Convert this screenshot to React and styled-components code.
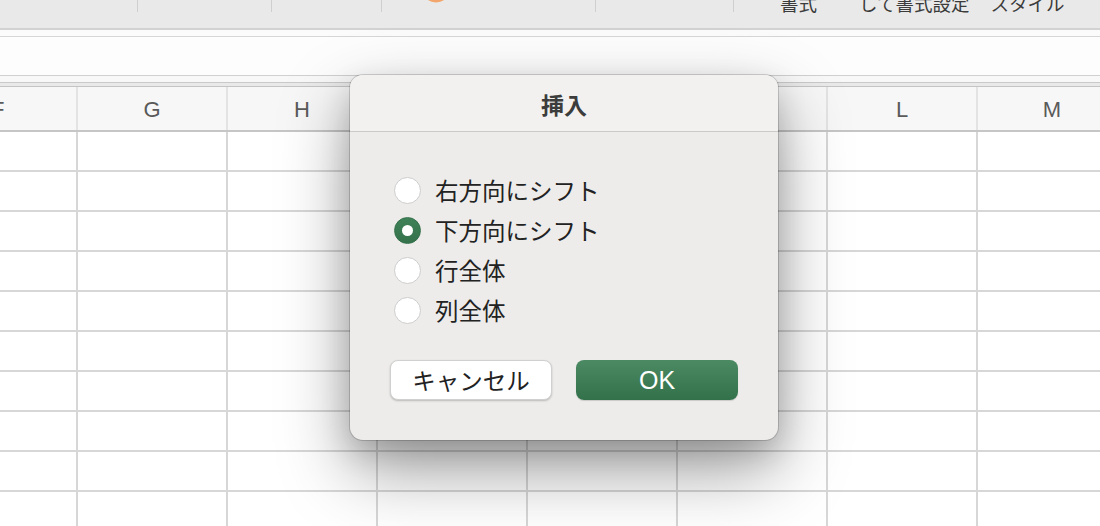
import React from "react";
import styled, { createGlobalStyle } from "styled-components";

const Global = createGlobalStyle`
  html, body { margin: 0; padding: 0; background: #ffffff; }
  body {
    width: 1100px; height: 526px; overflow: hidden;
    font-family: "Liberation Sans", "Noto Sans CJK JP", sans-serif;
  }
  * { box-sizing: border-box; }
`;

const Page = styled.div`
  position: relative;
  width: 1100px;
  height: 526px;
  overflow: hidden;
  display: flex;
  flex-direction: column;
`;

const Toolbar = styled.div`
  height: 30px;
  flex: none;
  background: #e9e9e9;
  border-bottom: 2px solid #d2d2d2;
  display: flex;
  align-items: flex-start;
  overflow: hidden;
`;

const Group = styled.div`
  width: ${(p) => p.$w}px;
  flex: none;
  height: 100%;
  display: flex;
  align-items: flex-start;
  position: relative;
`;

const Sep = styled.div`
  width: 1px;
  height: 12px;
  background: #cfcfcf;
  flex: none;
`;

const Label = styled.span`
  display: block;
  margin-left: ${(p) => p.$ml}px;
  flex: none;
  font-family: "Noto Sans CJK JP", sans-serif;
  font-size: 18.5px;
  line-height: 19px;
  margin-top: -6px;
  color: #3b3b3b;
  white-space: nowrap;
`;

const OrangeIcon = styled.svg`
  display: block;
  margin-left: 40px;
`;

const Strip = styled.div`
  height: ${(p) => p.$h}px;
  flex: none;
  background: ${(p) => p.$bg};
  border-bottom: 1px solid ${(p) => p.$line};
`;

const DoubleRule = styled.div`
  height: 5px;
  flex: none;
  background: #e9e9e9;
  border-top: 1px solid #c9c9c9;
  border-bottom: 1px solid #c4c4c4;
`;

const Sheet = styled.div`
  display: flex;
  flex-direction: column;
  flex: 1;
`;

const Row = styled.div`
  display: flex;
  height: ${(p) => (p.$header ? 45 : 40)}px;
  flex: none;
  background: ${(p) => (p.$header ? "#f7f7f7" : "#ffffff")};
  border-bottom: 2px solid ${(p) => (p.$header ? "#c6c6c6" : "#d7d7d7")};
`;

const Cell = styled.div`
  width: ${(p) => p.$w}px;
  flex: none;
  height: 100%;
  border-right: 2px solid ${(p) => (p.$header ? "#e3e3e3" : "#d7d7d7")};
  display: flex;
  align-items: center;
  justify-content: ${(p) => (p.$edge ? "flex-start" : "center")};
  font-family: "Liberation Sans", sans-serif;
  font-size: 22px;
  color: #5a5a5a;
  padding-top: 2px;
  overflow: hidden;
`;

const EdgeLetter = styled.span`
  margin-left: -9px;
`;

const Dialog = styled.div`
  position: absolute;
  left: 350px;
  top: 75px;
  width: 428px;
  height: 365px;
  border-radius: 13px;
  background: #edecea;
  box-shadow:
    0 0 0 1px rgba(0, 0, 0, 0.16),
    0 30px 70px rgba(0, 0, 0, 0.38),
    0 12px 30px rgba(0, 0, 0, 0.16);
  display: flex;
  flex-direction: column;
  overflow: hidden;
`;

const Title = styled.div`
  height: 57px;
  flex: none;
  background: #f2f1f0;
  border-bottom: 1px solid #cbcac9;
  display: flex;
  align-items: center;
  justify-content: center;
  font-family: "Noto Sans CJK JP", sans-serif;
  font-weight: 700;
  font-size: 23px;
  color: #3c3c3c;
  padding-top: 1px;
`;

const Body = styled.div`
  flex: 1;
  padding: 38px 40px 40px 44px;
  display: flex;
  flex-direction: column;
`;

const Options = styled.div`
  display: flex;
  flex-direction: column;
`;

const Option = styled.label`
  height: 40px;
  display: flex;
  align-items: center;
  gap: 14px;
  font-family: "Noto Sans CJK JP", sans-serif;
  font-size: 23.5px;
  color: #222222;
`;

const Radio = styled.span`
  width: 27px;
  height: 27px;
  flex: none;
  border-radius: 50%;
  display: flex;
  align-items: center;
  justify-content: center;
  background: ${(p) => (p.$checked ? "linear-gradient(#3f8158, #35724c)" : "#ffffff")};
  border: 1px solid ${(p) => (p.$checked ? "#33704a" : "#cdcdcd")};
`;

const Dot = styled.span`
  width: 11px;
  height: 11px;
  border-radius: 50%;
  background: #ffffff;
`;

const Buttons = styled.div`
  margin-top: 30px;
  margin-left: -4px;
  display: flex;
  gap: 24px;
`;

const Button = styled.button`
  width: 162px;
  height: 40px;
  border-radius: 8px;
  border: ${(p) => (p.$primary ? "none" : "0.5px solid #d0d0d0")};
  background: ${(p) => (p.$primary ? "linear-gradient(#4b8a63, #33714b)" : "#ffffff")};
  color: ${(p) => (p.$primary ? "#ffffff" : "#222222")};
  box-shadow: ${(p) =>
    p.$primary ? "0 1px 1px rgba(0,0,0,0.15)" : "0 1px 2px rgba(0,0,0,0.22)"};
  font-family: ${(p) =>
    p.$primary ? '"Liberation Sans", sans-serif' : '"Noto Sans CJK JP", sans-serif'};
  font-size: ${(p) => (p.$primary ? "25px" : "23.5px")};
  font-weight: 400;
  display: flex;
  align-items: center;
  justify-content: center;
  padding: 0;
`;

const columns = [
  { w: 78, label: "F", edge: true },
  { w: 150, label: "G" },
  { w: 150, label: "H" },
  { w: 150, label: "I" },
  { w: 150, label: "J" },
  { w: 150, label: "K" },
  { w: 150, label: "L" },
  { w: 150, label: "M" },
];

const options = [
  { label: "右方向にシフト", checked: false },
  { label: "下方向にシフト", checked: true },
  { label: "行全体", checked: false },
  { label: "列全体", checked: false },
];

export default function App() {
  const rows = Array.from({ length: 10 }, (_, i) => i);
  return (
    <Page>
      <Global />
      <Toolbar>
        <Group $w={137} />
        <Sep />
        <Group $w={133} />
        <Sep />
        <Group $w={109} />
        <Sep />
        <Group $w={213}>
          <OrangeIcon width="30" height="4" viewBox="0 0 30 4">
            <circle cx="14" cy="-12" r="14.5" fill="#f2a66b" />
          </OrangeIcon>
        </Group>
        <Sep />
        <Group $w={137} />
        <Sep />
        <Group $w={366}>
          <Label $ml={46}>書式</Label>
          <Label $ml={42}>して書式設定</Label>
          <Label $ml={21}>スタイル</Label>
        </Group>
      </Toolbar>
      <Strip $h={7} $bg="#fbfbfb" $line="#d6d6d6" />
      <Strip $h={39} $bg="#fdfdfd" $line="#d0d0d0" />
      <Strip $h={6} $bg="#f8f8f8" $line="transparent" />
      <DoubleRule />
      <Sheet>
        <Row $header>
          {columns.map((c) => (
            <Cell key={c.label} $w={c.w} $header $edge={c.edge}>
              {c.edge ? <EdgeLetter>{c.label}</EdgeLetter> : c.label}
            </Cell>
          ))}
        </Row>
        {rows.map((r) => (
          <Row key={r}>
            {columns.map((c) => (
              <Cell key={c.label} $w={c.w} />
            ))}
          </Row>
        ))}
      </Sheet>

      <Dialog>
        <Title>挿入</Title>
        <Body>
          <Options>
            {options.map((o) => (
              <Option key={o.label}>
                <Radio $checked={o.checked}>{o.checked && <Dot />}</Radio>
                {o.label}
              </Option>
            ))}
          </Options>
          <Buttons>
            <Button>キャンセル</Button>
            <Button $primary>OK</Button>
          </Buttons>
        </Body>
      </Dialog>
    </Page>
  );
}
